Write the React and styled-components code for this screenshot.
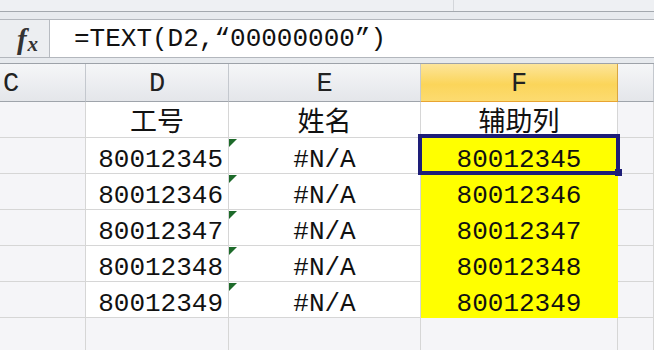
import React from 'react';
import styled, { createGlobalStyle, css } from 'styled-components';

const GlobalStyle = createGlobalStyle`
  html, body {
    margin: 0;
    padding: 0;
    background: #f5f5f8;
  }
  body {
    width: 654px;
    height: 350px;
    overflow: hidden;
    font-family: "Liberation Mono", "DejaVu Sans Mono", monospace;
    color: #111;
  }
`;

const TopStrip = styled.div`
  display: flex;
  height: 11px;
  background: #eef0f3;
  border-bottom: 1px solid #a3a8ae;
`;

const StripPane = styled.div`
  width: 453px;
  border-right: 1px solid #d3d6da;
`;

const Band = styled.div`
  height: ${p => p.h}px;
  background: #e7eaee;
  ${p => p.dark && css`border-bottom: 1px solid #9da2a9;`}
`;

const FormulaBar = styled.div`
  display: flex;
  height: 37px;
  background: #fff;
  border-top: 1px solid #b3b7bd;
  border-bottom: 1px solid #b3b7bd;
`;

const FxBox = styled.div`
  width: 50px;
  display: flex;
  align-items: baseline;
  justify-content: center;
  padding-top: 2px;
  padding-left: 6px;
  box-sizing: border-box;
  background: #eceef1;
  border-right: 1px solid #b7bbc1;
  font-family: "Liberation Serif", serif;
  font-style: italic;
  font-weight: bold;
  font-size: 29px;
  line-height: 34px;
  color: #333;
`;

const FxSub = styled.span`
  position: relative;
  top: 2px;
  margin-left: 1px;
  font-size: 21px;
`;

const FormulaText = styled.div`
  padding-left: 24px;
  font-size: 26px;
  line-height: 38px;
`;

const Sheet = styled.div`
  display: grid;
  grid-template-columns: 86px 143px 192px 197px 1fr;
  grid-template-rows: 38px;
  grid-auto-rows: 36px;
`;

const HeadCell = styled.div`
  box-sizing: border-box;
  padding-top: 4px;
  font-size: 27px;
  line-height: 32px;
  text-align: ${p => (p.left ? 'left' : 'center')};
  padding-left: ${p => (p.left ? '3px' : '0')};
  color: #222;
  background: linear-gradient(#f5f6f8, #e4e6ea);
  border-right: 1px solid #c4c8ce;
  border-bottom: 1px solid #9fa4ab;
  ${p => p.active && css`
    background: linear-gradient(#fde59a, #fbd55a 55%, #fcdb70);
    border-bottom-color: #e8a431;
    border-right-color: #d9a640;
  `}
`;

const fills = {
  white: css`background: #fff; border-color: #d6d6d6;`,
  yellow: css`background: #ffff00; border-color: #ffff00;`,
  blank: css`background: #f5f5f8; border-color: #d6d6d6;`,
};

const Cell = styled.div`
  position: relative;
  box-sizing: border-box;
  border-right: 1px solid;
  border-bottom: 1px solid;
  ${p => fills[p.fill || 'blank']}
  font-size: 26px;
  text-align: ${p => p.align || 'center'};
  padding-right: ${p => (p.align === 'right' ? '5px' : '0')};
  ${p => p.cjk
    ? css`
      font-family: "Noto Sans CJK SC", sans-serif;
      font-size: 27px;
      line-height: 35px;
    `
    : css`
      padding-top: 8px;
      line-height: 28px;
    `}
`;

const ErrorMark = styled.span`
  position: absolute;
  top: 1px;
  left: 0;
  width: 0;
  height: 0;
  border-top: 8px solid #1d6a2a;
  border-right: 8px solid transparent;
`;

const Selection = styled.div`
  position: absolute;
  top: -4px;
  left: -3px;
  right: -3px;
  bottom: -2px;
  border: 4px solid #1e1e78;
  z-index: 2;
  pointer-events: none;
`;

const FillHandle = styled.span`
  position: absolute;
  right: -6px;
  bottom: -5px;
  width: 7px;
  height: 7px;
  background: #1e1e78;
`;

const ids = ['80012345', '80012346', '80012347', '80012348', '80012349'];

export default function App() {
  return (
    <>
      <GlobalStyle />
      <TopStrip>
        <StripPane />
      </TopStrip>
      <Band h={7} />
      <FormulaBar>
        <FxBox>
          f<FxSub>x</FxSub>
        </FxBox>
        <FormulaText>=TEXT(D2,“00000000”)</FormulaText>
      </FormulaBar>
      <Band h={5} dark />
      <Sheet>
        <HeadCell left>C</HeadCell>
        <HeadCell>D</HeadCell>
        <HeadCell>E</HeadCell>
        <HeadCell active>F</HeadCell>
        <HeadCell />

        <Cell />
        <Cell fill="white" cjk>工号</Cell>
        <Cell fill="white" cjk>姓名</Cell>
        <Cell fill="white" cjk>辅助列</Cell>
        <Cell />

        {ids.map((id, i) => (
          <React.Fragment key={id}>
            <Cell />
            <Cell fill="white" align="right">{id}</Cell>
            <Cell fill="white">
              <ErrorMark />
              #N/A
            </Cell>
            <Cell fill="yellow">
              {id}
              {i === 0 && (
                <Selection>
                  <FillHandle />
                </Selection>
              )}
            </Cell>
            <Cell />
          </React.Fragment>
        ))}

        <Cell />
        <Cell />
        <Cell />
        <Cell />
        <Cell />
      </Sheet>
    </>
  );
}
